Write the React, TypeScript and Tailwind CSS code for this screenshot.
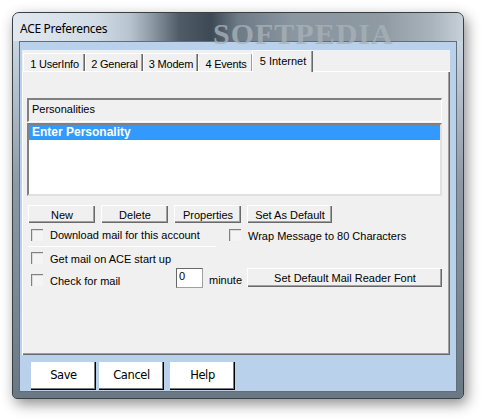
import React from "react";

const F = { fontFamily: '"Liberation Sans", Arial, sans-serif' };

function Tab({ label, w, selected }: { label: string; w: string; selected?: boolean }) {
  if (selected) {
    return (
      <div
        className={`${w} h-[22px] -mb-[1px] mx-[-1px] relative z-10 flex items-start justify-center pt-[3px] bg-[#f0f0f0] border-l border-t border-white shadow-[inset_-1px_0_0_#696969,inset_-2px_0_0_#a0a0a0] text-[11px] leading-[14px] text-black`}
      >
        {label}
      </div>
    );
  }
  return (
    <div
      className={`${w} h-[18px] flex items-start justify-center pt-[3px] bg-[#f0f0f0] border-l border-t border-white shadow-[inset_-1px_0_0_#696969,inset_-2px_0_0_#a0a0a0] text-[11px] leading-[14px] text-black tracking-[-0.2px]`}
    >
      {label}
    </div>
  );
}

function Btn({ label, w }: { label: string; w: string }) {
  return (
    <div
      className={`${w} h-[18px] flex items-center justify-center bg-[#f0f0f0] border-t border-l border-white shadow-[inset_-1px_-1px_0_#696969,inset_-2px_-2px_0_#a0a0a0] text-[11px] leading-[13px] text-black pt-[1px]`}
    >
      {label}
    </div>
  );
}

function Check() {
  return (
    <div className="w-[12px] h-[12px] bg-[#f4f4f4] border-t border-l border-[#808080] shadow-[inset_1px_1px_0_#dcdcdc] shrink-0" />
  );
}

function BigBtn({ label }: { label: string }) {
  return (
    <div
      className="w-[65px] h-[28px] flex items-center justify-center bg-white shadow-[inset_-1px_-1px_0_#000,inset_-2px_-2px_0_#7a7a7a] text-black"
      style={{ fontFamily: '"DejaVu Sans", "Liberation Sans", sans-serif', fontSize: "11.5px", letterSpacing: "-0.4px" }}
    >
      {label}
    </div>
  );
}

export default function App() {
  return (
    <div className="w-[484px] h-[419px] bg-white pl-[12px] pt-[12px]" style={F}>
      <div className="w-[452px] h-[387px] rounded-t-[7px] rounded-b-[5px] border border-[#3a3f44] shadow-[3px_5px_14px_rgba(0,0,0,0.45)] bg-[linear-gradient(180deg,#8e9ba6_0%,#7d8a95_60%,#5e6b76_100%)] flex flex-col overflow-hidden">
        <div className="relative h-[28px] shrink-0 bg-[linear-gradient(90deg,#e1e8ef_0%,#d2dce6_18%,#b7c4cf_26%,#8a98a4_31%,#4f5c67_37%,#3d4954_44%,#6e7b86_50%,#8a96a0_62%,#8f9aa3_82%,#a8b3bc_93%,#c8d0d7_100%)]">
          <div
            className="absolute left-[200px] top-[-2px] text-[30px] font-bold text-[#a6b1ba] tracking-[1px] opacity-80"
            style={{ fontFamily: '"Liberation Serif", "Times New Roman", serif' }}
          >
            SOFTPEDIA
          </div>
          <div
            className="absolute left-[7px] top-[7px] text-black"
            style={{ fontFamily: '"Noto Sans", "Liberation Sans", sans-serif', fontSize: "12px", letterSpacing: "-0.3px" }}
          >
            ACE Preferences
          </div>
        </div>
        <div className="flex-1 flex px-[6px] pb-[6px] bg-[linear-gradient(180deg,#c9d6e2_0%,#8d9aa5_40%,#6a7884_100%)]">
          <div className="flex-1 border border-[#5e6e7d] bg-[#b9d1ea] flex flex-col pl-[2px] pr-[6px] pt-[8px]">
            {/* tab control */}
            <div className="h-[305px] bg-[#f0f0f0] flex flex-col">
              <div className="h-[21px] flex items-end pl-[1px]">
                <Tab label="1 UserInfo" w="w-[62px]" />
                <Tab label="2 General" w="w-[58px]" />
                <Tab label="3 Modem" w="w-[55px]" />
                <Tab label="4 Events" w="w-[55px]" />
                <Tab label="5 Internet" w="w-[61px]" selected />
              </div>
              <div className="flex-1 border-t border-l border-white shadow-[inset_-1px_-1px_0_#696969,inset_-2px_-2px_0_#a0a0a0] flex flex-col pl-[4px] pr-[6px] pt-[26px] text-[11px] leading-[13px] text-black">
                <div className="w-[415px] h-[24px] border-t-2 border-l-2 border-t-[#808080] border-l-[#808080] border-r border-b border-r-white border-b-white bg-[#f0f0f0] pl-[3px] pt-[3px]">
                  Personalities
                </div>
                <div className="w-[415px] h-[73px] mt-[1px] border-t-2 border-l-2 border-t-[#808080] border-l-[#808080] border-r-2 border-b-2 border-r-[#e0e0e0] border-b-[#e0e0e0] bg-white">
                  <div className="h-[15px] bg-[#3399ff] text-white font-bold text-[12px] leading-[15px] pl-[3px]">
                    Enter Personality
                  </div>
                </div>
                <div className="flex gap-[6px] mt-[9px] pl-[1px]">
                  <Btn label="New" w="w-[67px]" />
                  <Btn label="Delete" w="w-[67px]" />
                  <Btn label="Properties" w="w-[67px]" />
                  <Btn label="Set As Default" w="w-[85px]" />
                </div>
                <div className="flex h-[13px] mt-[6px] pl-[4px]">
                  <div className="w-[198px] flex items-start">
                    <Check />
                    <span className="ml-[7px]">Download mail for this account</span>
                  </div>
                  <div className="flex items-start">
                    <Check />
                    <span className="ml-[7px] mt-[1px]">Wrap Message to 80 Characters</span>
                  </div>
                </div>
                <div className="w-[188px] h-[1px] bg-white mt-[4px] ml-[1px]" />
                <div className="flex h-[13px] items-start mt-[5px] pl-[4px]">
                  <Check />
                  <span className="ml-[7px] mt-[1px]">Get mail on ACE start up</span>
                </div>
                <div className="flex items-start mt-[3px] pl-[4px]">
                  <div className="mt-[6px]"><Check /></div>
                  <span className="ml-[7px] mt-[7px] w-[126px]">Check for mail</span>
                  <div className="w-[27px] h-[20px] bg-white border border-t-[#696969] border-l-[#696969] border-r-[#a0a0a0] border-b-[#a0a0a0] pl-[2px] pt-[1px]">
                    0
                  </div>
                  <span className="ml-[6px] mt-[6px] w-[38px]">minute</span>
                  <div className="w-[195px] h-[19px] flex items-center justify-center bg-[#f0f0f0] border-t border-l border-white shadow-[inset_-1px_-1px_0_#696969,inset_-2px_-2px_0_#a0a0a0] pt-[1px]">
                    Set Default Mail Reader Font
                  </div>
                </div>
              </div>
            </div>
            <div className="flex gap-[3px] mt-[7px] pl-[9px]">
              <BigBtn label="Save" />
              <BigBtn label="Cancel" />
              <div className="ml-[3px]"><BigBtn label="Help" /></div>
            </div>
          </div>
        </div>
      </div>
    </div>
  );
}
